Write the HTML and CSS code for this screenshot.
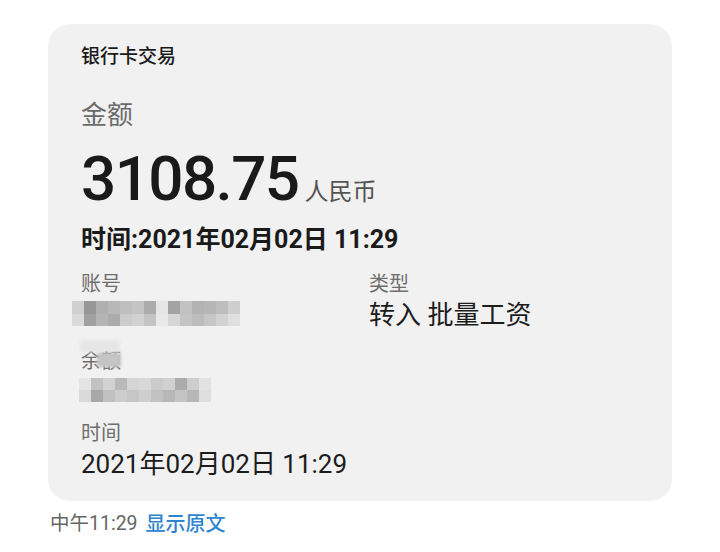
FILE: index.html
```html
<!DOCTYPE html>
<html lang="zh-CN">
<head>
<meta charset="utf-8">
<link rel="stylesheet" href="styles.css">
</head>
<body>
<div class="page">
  <div class="card">
    <div class="title">银行卡交易</div>
    <div class="label-big">金额</div>
    <div class="amount"><span class="num">3108.75</span><span class="cur">人民币</span></div>
    <div class="time-bold">时间:2021年02月02日 11:29</div>
    <div class="grid">
      <div class="col">
        <div class="label">账号</div>
        <div class="value">
          <div class="mosaic acct">
            <i style="background:#d0d0d0"></i><i style="background:#979797"></i><i style="background:#b0b0b0"></i><i style="background:#b8b8b8"></i><i style="background:#bfbfbf"></i><i style="background:#c4c4c4"></i><i style="background:#acacac"></i><i style="background:#e6e6e6"></i><i style="background:#a3a3a3"></i><i style="background:#c2c2c2"></i><i style="background:#b3b3b3"></i><i style="background:#b6b6b6"></i><i style="background:#bebebe"></i><i style="background:#cecece"></i>
            <i style="background:#dadada"></i><i style="background:#a0a0a0"></i><i style="background:#b4b4b4"></i><i style="background:#ababab"></i><i style="background:#cccccc"></i><i style="background:#d2d2d2"></i><i style="background:#c4c4c4"></i><i style="background:#e9e9e9"></i><i style="background:#d6d6d6"></i><i style="background:#c4c4c4"></i><i style="background:#bcbcbc"></i><i style="background:#c6c6c6"></i><i style="background:#d2d2d2"></i><i style="background:#dfdfdf"></i>
          </div>
        </div>
        <div class="label balance-label"><span>余额</span><b class="cover"></b></div>
        <div class="bal-row">
          <div class="mosaic bal">
            <i style="background:#e4e4e4"></i><i style="background:#c2c2c2"></i><i style="background:#d2d2d2"></i><i style="background:#b9b9b9"></i><i style="background:#d5d5d5"></i><i style="background:#d8d8d8"></i><i style="background:#cbcbcb"></i><i style="background:#d0d0d0"></i><i style="background:#acacac"></i><i style="background:#cdcdcd"></i><i style="background:#e2e2e2"></i>
            <i style="background:#dadada"></i><i style="background:#a8a8a8"></i><i style="background:#c0c0c0"></i><i style="background:#cdcdcd"></i><i style="background:#c6c6c6"></i><i style="background:#cfcfcf"></i><i style="background:#c2c2c2"></i><i style="background:#b7b7b7"></i><i style="background:#c4c4c4"></i><i style="background:#b8b8b8"></i><i style="background:#dedede"></i>
          </div>
        </div>
      </div>
      <div class="col">
        <div class="label">类型</div>
        <div class="value big">转入 批量工资</div>
      </div>
    </div>
    <div class="label">时间</div>
    <div class="value big">2021年02月02日 11:29</div>
  </div>
  <div class="footer"><span class="ftime">中午11:29</span><span class="link">显示原文</span></div>
</div>
</body>
</html>
```

FILE: styles.css
```css
* { box-sizing: border-box; }
html, body { margin: 0; padding: 0; background: #ffffff; }
body {
  font-family: Roboto, "Noto Sans CJK SC", sans-serif;
  color: #1c1c1c;
  width: 720px;
  height: 552px;
  overflow: hidden;
}
.page { padding: 24px 48px 0 48px; }
.card {
  background: #f1f1f1;
  border-radius: 22px;
  height: 477px;
  padding: 20px 33px 0 33px;
}
.title {
  font-size: 19px;
  line-height: 26px;
  font-weight: 500;
  color: #1a1a1a;
}
.label-big {
  margin-top: 28px;
  font-size: 26px;
  line-height: 34px;
  color: #6a6a6a;
}
.amount {
  margin-top: 14px;
  height: 66px;
  display: flex;
  align-items: baseline;
  line-height: 66px;
}
.num {
  font-size: 62px;
  font-weight: 500;
  letter-spacing: -1.6px;
  color: #1a1a1a;
}
.cur {
  font-size: 24px;
  color: #555555;
  margin-left: 6px;
}
.time-bold {
  margin-top: 12px;
  font-size: 25px;
  line-height: 32px;
  font-weight: 700;
  color: #1a1a1a;
}
.grid {
  margin-top: 15px;
  display: grid;
  grid-template-columns: 288px 1fr;
}
.label {
  font-size: 20px;
  line-height: 26px;
  color: #6e6e6e;
}
.value {
  margin-top: 2px;
  min-height: 32px;
  font-size: 25px;
  line-height: 32px;
  color: #1c1c1c;
}
.value.big { font-size: 26px; }
.mosaic {
  display: grid;
  filter: blur(0.6px);
}
.mosaic i { display: block; }
.acct {
  margin: 4px 0 0 -9px;
  width: 168px;
  grid-template-columns: repeat(14, 12px);
  grid-auto-rows: 12.5px;
}
.balance-label {
  margin-top: 15px;
  position: relative;
  width: 60px;
}
.balance-label .cover {
  position: absolute;
  left: 16px;
  top: 5px;
  width: 24px;
  height: 14px;
  background: #c4c4c4;
  filter: blur(1.5px);
}
.balance-label::before {
  content: "";
  position: absolute;
  left: -1px;
  top: -8px;
  width: 40px;
  height: 12px;
  background: #e6e6e6;
  filter: blur(1.5px);
}
.bal-row { padding-top: 4px; height: 46px; }
.bal {
  margin-left: -2px;
  width: 132px;
  grid-template-columns: repeat(11, 12px);
  grid-auto-rows: 12px;
}
.footer {
  padding: 10px 0 0 2px;
  font-size: 20px;
  line-height: 26px;
  display: flex;
  gap: 8px;
}
.ftime { color: #666666; font-size: 19.5px; }
.link { color: #2f84d0; font-weight: 500; }
```
